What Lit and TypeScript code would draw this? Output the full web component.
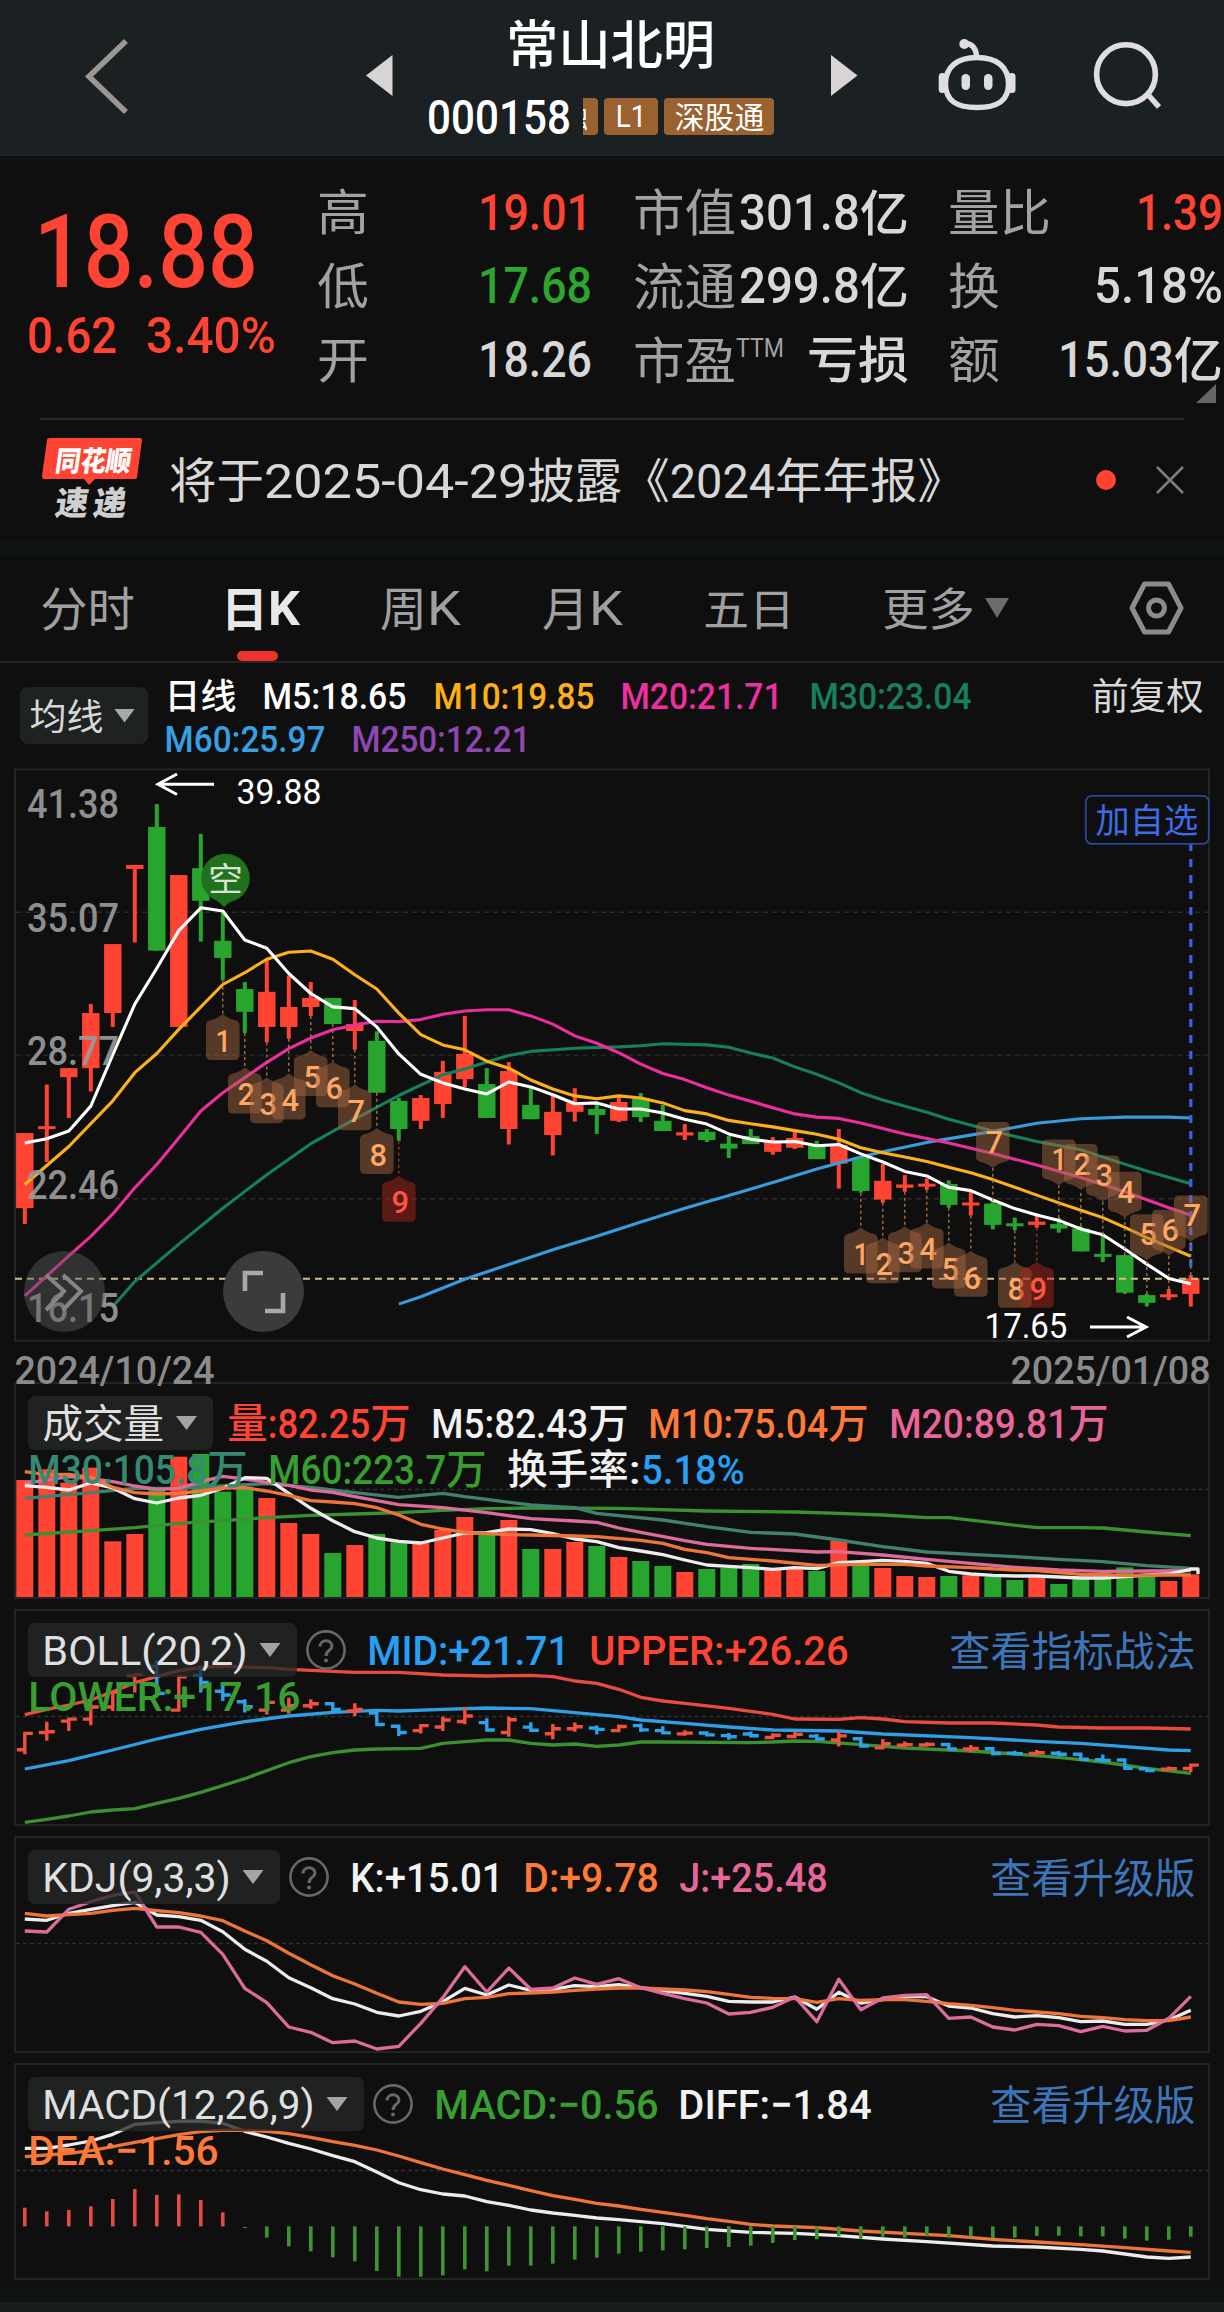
import { LitElement, html, svg, css, nothing } from "lit";
import { customElement, property } from "lit/decorators.js";

/* ---------- fitted text: Latin runs are condensed to a given width ---------- */

const CJK = /([\u3000-\u9fff\uff00-\uffef]+)/;
const LATIN_CAP = 0.711;
const CJK_RATIO = 1.38;

const weightOf = (run: string) =>
  [...run].reduce((n, c) => n + (".:,()".includes(c) ? 0.5 : 1), 0);

function fitRuns(text: string, w: number, cap: number, x = 0, cy = 0) {
  const runs = text.split(CJK).filter((r) => r.length > 0);
  const allCjk = runs.every((r) => CJK.test(r));
  const cjkSize = allCjk ? (w / text.length) * 1.02 : cap * CJK_RATIO;
  const latinSize = cap / LATIN_CAP;
  const pad = 0.04 * (allCjk ? cjkSize : latinSize);
  const total = w + pad * 2;
  const cjkWidth = runs.filter((r) => CJK.test(r)).reduce((n, r) => n + r.length * cjkSize, 0);
  const latinUnits = runs.filter((r) => !CJK.test(r)).reduce((n, r) => n + weightOf(r), 0);
  let cursor = x - pad;
  return runs.map((r) => {
    const cjk = CJK.test(r);
    const size = cjk ? cjkSize : latinSize;
    const len = allCjk ? total : cjk ? r.length * cjkSize : ((total - cjkWidth) * weightOf(r)) / latinUnits;
    const base = cy + size * (cjk ? 0.38 : 0.356);
    const at = cursor;
    cursor += len;
    return svg`<text x=${at} y=${base} font-size=${size} textLength=${len} lengthAdjust="spacingAndGlyphs">${r}</text>`;
  });
}

@customElement("fit-text")
class FitText extends LitElement {
  @property() text = "";
  @property({ type: Number }) w = 100;
  @property({ type: Number }) cap = 29;

  static styles = css`
    :host { display: block; flex: none; }
    svg { display: block; overflow: visible; fill: currentColor; }
    text { white-space: pre; }
  `;

  render() {
    const h = this.cap * 1.3;
    return html`<svg width=${this.w} height=${h}>${fitRuns(this.text, this.w, this.cap, 0, h / 2)}</svg>`;
  }
}

const fit = (text: string, w: number, cap: number, cls = "") =>
  html`<fit-text class=${cls} .text=${text} .w=${w} .cap=${cap}></fit-text>`;

/* ---------- series data ---------- */

const X0 = 24.8;
const STEP = 22;
const xAt = (i: number) => X0 + STEP * i;

type Series = Array<[number, number]>;
const seq = (...v: number[]): Series => v.map((y, i) => [i, y]);

// [high, body top, body bottom, low, rising]
const CANDLES: Array<[number, number, number, number, number]> = [
  [914, 914, 1098, 1137, 1], [795, 897, 904, 985, 1], [755, 755, 777, 877, 1], [598, 620, 755, 812, 1],
  [451, 451, 620, 654, 1], [257, 257, 267, 447, 1], [108, 164, 467, 467, 0], [282, 282, 654, 654, 1],
  [181, 265, 345, 445, 0], [370, 443, 485, 540, 0], [544, 561, 617, 669, 0], [490, 568, 654, 692, 1],
  [528, 605, 654, 683, 1], [544, 583, 605, 627, 1], [583, 583, 647, 647, 0], [588, 647, 664, 710, 1],
  [665, 688, 815, 815, 0], [828, 835, 904, 933, 0], [821, 828, 884, 904, 1], [737, 764, 843, 877, 1],
  [627, 720, 782, 802, 1], [755, 794, 877, 877, 0], [740, 762, 904, 942, 1], [800, 845, 880, 880, 0],
  [820, 862, 919, 969, 1], [804, 840, 862, 886, 1], [838, 855, 870, 916, 0], [825, 838, 884, 887, 1],
  [816, 828, 875, 887, 0], [845, 884, 909, 909, 0], [892, 912, 920, 931, 1], [904, 911, 931, 936, 0],
  [921, 940, 952, 975, 0], [904, 921, 941, 941, 0], [924, 936, 960, 967, 1], [909, 926, 950, 953, 1],
  [933, 945, 978, 978, 0], [904, 943, 989, 1050, 1], [975, 975, 1056, 1060, 0], [990, 1031, 1077, 1085, 1],
  [1017, 1040, 1048, 1058, 1], [1025, 1038, 1044, 1053, 1], [1030, 1039, 1090, 1097, 0], [1057, 1084, 1090, 1116, 1],
  [1080, 1087, 1139, 1150, 0], [1121, 1135, 1141, 1152, 0], [1111, 1131, 1139, 1146, 1], [1122, 1137, 1148, 1158, 0],
  [1142, 1148, 1204, 1204, 0], [1163, 1210, 1217, 1230, 0], [1213, 1213, 1305, 1308, 0], [1308, 1311, 1330, 1339, 0],
  [1296, 1309, 1315, 1323, 1], [1262, 1270, 1308, 1339, 1],
];

const MA5 = seq(938, 928, 909, 848, 722, 598, 510, 418, 362, 370, 441, 461, 523, 572, 605, 609, 654, 720, 770, 791, 806, 818, 789, 801, 820, 842, 840, 855, 855, 865, 880, 892, 916, 929, 936, 935, 945, 942, 965, 985, 1008, 1019, 1047, 1055, 1078, 1099, 1115, 1128, 1149, 1163, 1198, 1235, 1270, 1283);
const MA10: Series = [[0, 1040], [2, 947], [4, 835], [5, 766], [6, 719], [7, 660], [9, 550], [10, 521], [11, 488], [12, 471], [13, 468], [14, 488], [15, 526], [16, 561], [17, 620], [18, 673], [19, 698], [20, 710], [21, 738], [22, 755], [23, 784], [24, 806], [25, 823], [26, 830], [27, 823], [28, 828], [29, 840], [30, 859], [31, 867], [32, 883], [33, 891], [34, 899], [35, 908], [36, 917], [37, 929], [38, 950], [39, 962], [40, 973], [41, 984], [42, 998], [43, 1011], [44, 1028], [45, 1047], [46, 1066], [47, 1085], [48, 1103], [49, 1121], [50, 1145], [51, 1170], [52, 1193], [53, 1216]];
const MA20: Series = [[0, 1313], [2, 1215], [3, 1167], [4, 1112], [5, 1048], [6, 991], [7, 926], [8, 860], [9, 815], [10, 778], [11, 741], [12, 707], [13, 681], [14, 661], [15, 649], [16, 640], [17, 641], [18, 636], [19, 623], [20, 615], [21, 612], [22, 612], [23, 627], [24, 647], [25, 676], [26, 694], [27, 717], [28, 745], [29, 768], [30, 783], [31, 803], [32, 821], [33, 836], [34, 852], [35, 867], [36, 875], [37, 878], [38, 889], [40, 916], [42, 938], [44, 964], [46, 992], [48, 1023], [50, 1058], [52, 1097], [53, 1115]];
const MA30: Series = [[4.1, 1333], [5, 1278], [7, 1186], [9, 1098], [11, 1016], [13, 940], [15, 880], [17, 822], [19, 771], [20, 757], [21, 740], [22, 724], [23, 714], [25, 706], [27, 703], [28, 700], [29, 695], [31, 698], [32, 704], [33, 718], [34, 730], [35, 752], [36, 770], [37, 791], [38, 815], [39, 833], [41, 863], [42, 880], [44, 909], [46, 935], [48, 955], [50, 990], [51, 1007], [53, 1038]];
const MA60: Series = [[17, 1333], [18, 1315], [20, 1272], [22, 1236], [24, 1200], [26, 1167], [28, 1132], [30, 1098], [32, 1067], [34, 1035], [36, 1002], [38, 973], [39, 960], [41, 937], [44, 910], [46, 890], [48, 879], [50, 875], [52, 875], [53, 877]];

// [bar top, rising]
const VOLUME: Array<[number, number]> = [
  [300, 1], [268, 1], [308, 1], [263, 1], [484, 1], [462, 1], [325, 0], [230, 1], [222, 0], [335, 0], [322, 0],
  [354, 1], [429, 1], [462, 1], [519, 0], [495, 1], [462, 0], [487, 0], [487, 1], [450, 1], [411, 1], [465, 0],
  [420, 1], [507, 0], [507, 1], [486, 1], [498, 0], [531, 1], [543, 0], [558, 0], [576, 1], [567, 0], [564, 0],
  [552, 0], [570, 1], [567, 1], [573, 0], [482, 1], [557, 0], [564, 1], [588, 1], [591, 1], [588, 0], [586, 1],
  [590, 0], [600, 0], [592, 1], [612, 0], [597, 0], [578, 0], [562, 0], [588, 0], [603, 1], [583, 1],
];
const V5 = seq(317, 322, 330, 309, 324, 356, 369, 354, 346, 325, 293, 295, 340, 385, 422, 455, 474, 484, 489, 474, 459, 458, 447, 449, 461, 477, 485, 503, 513, 524, 540, 555, 559, 563, 568, 563, 566, 548, 545, 541, 544, 550, 574, 582, 586, 588, 588, 591, 594, 594, 590, 585, 582, 568);
const V10: Series = [[0, 275], [1, 284], [2, 283], [3, 292], [4, 322], [5, 338], [6, 342], [7, 340], [8, 333], [9, 324], [10, 323], [11, 333], [12, 346], [13, 362], [14, 366], [15, 371], [16, 383], [17, 405], [18, 433], [19, 447], [20, 457], [21, 461], [22, 464], [23, 465], [25, 468], [26, 470], [28, 481], [29, 490], [30, 508], [31, 518], [32, 533], [34, 543], [36, 556], [38, 553], [40, 553], [41, 558], [43, 563], [45, 570], [46, 572], [48, 583], [50, 586], [52, 585], [53, 585]];
const V20: Series = [[0, 310], [2, 290], [3, 296], [4, 305], [5, 318], [6, 328], [7, 325], [8, 305], [9, 289], [10, 297], [11, 307], [12, 316], [13, 330], [14, 337], [15, 350], [17, 374], [19, 383], [21, 398], [23, 416], [25, 423], [26, 427], [27, 444], [28, 457], [30, 482], [31, 493], [33, 505], [36, 516], [37, 515], [39, 525], [41, 538], [43, 550], [45, 562], [47, 570], [49, 574], [51, 573], [53, 572]];
const V30: Series = [[0, 355], [3, 338], [5, 325], [7, 325], [9, 318], [11, 311], [13, 322], [15, 338], [17, 352], [19, 340], [20, 350], [21, 358], [23, 375], [25, 383], [26, 400], [29, 420], [31, 440], [33, 457], [35, 462], [37, 480], [39, 500], [41, 516], [43, 523], [45, 530], [47, 538], [49, 545], [51, 557], [53, 565]];
const V60: Series = [[0, 465], [3, 452], [5, 443], [7, 430], [9, 422], [11, 413], [13, 406], [15, 402], [17, 398], [19, 391], [21, 386], [23, 384], [27, 385], [31, 393], [35, 396], [37, 400], [39, 405], [41, 413], [42, 413], [44, 428], [46, 443], [48, 443], [49, 444], [51, 456], [53, 467]];

const UPPER: Series = [[0, 1004], [1, 988], [2, 975], [3, 960], [4, 935], [5, 908], [6, 890], [7, 872], [8, 862], [9, 859], [11, 863], [12, 868], [15, 877], [17, 877], [19, 885], [21, 888], [23, 886], [24, 890], [25, 903], [26, 910], [27, 928], [28, 952], [29, 963], [30, 970], [32, 985], [34, 1003], [35, 1017], [37, 1018], [38, 1013], [39, 1017], [40, 1025], [42, 1029], [44, 1029], [46, 1035], [47, 1041], [49, 1044], [51, 1044], [53, 1047]];
const MID: Series = [[0, 1167], [2, 1142], [4, 1110], [6, 1077], [8, 1048], [10, 1025], [12, 1008], [14, 997], [16, 991], [17, 993], [19, 988], [21, 984], [23, 986], [25, 998], [27, 1010], [28, 1020], [30, 1030], [32, 1041], [34, 1050], [37, 1053], [39, 1062], [43, 1073], [46, 1084], [48, 1090], [50, 1100], [52, 1110], [53, 1112]];
const LOWER: Series = [[0, 1327], [1, 1318], [2, 1308], [3, 1296], [4, 1290], [5, 1286], [6, 1270], [7, 1255], [8, 1237], [10, 1196], [12, 1148], [13, 1130], [14, 1118], [15, 1110], [16, 1107], [18, 1105], [19, 1090], [20, 1085], [21, 1080], [22, 1080], [23, 1090], [24, 1095], [25, 1092], [26, 1099], [27, 1095], [28, 1086], [29, 1086], [33, 1088], [34, 1086], [35, 1083], [36, 1084], [38, 1094], [40, 1104], [43, 1113], [45, 1122], [47, 1132], [49, 1146], [51, 1165], [53, 1180]];

const KLINE = seq(297, 301, 280, 268, 257, 247, 285, 290, 301, 335, 388, 424, 473, 503, 536, 552, 577, 588, 574, 545, 505, 525, 495, 511, 508, 497, 500, 494, 503, 512, 520, 529, 544, 546, 546, 531, 568, 517, 549, 539, 530, 530, 558, 564, 581, 591, 587, 593, 605, 603, 613, 613, 600, 571);
const DLINE = seq(280, 288, 284, 280, 271, 265, 272, 278, 288, 302, 333, 362, 400, 434, 467, 492, 520, 546, 553, 550, 536, 532, 521, 519, 516, 511, 507, 504, 504, 507, 510, 515, 523, 532, 535, 536, 547, 536, 541, 539, 539, 544, 551, 556, 563, 571, 576, 581, 589, 593, 599, 602, 602, 591);
const JLINE = seq(333, 336, 268, 245, 226, 216, 321, 321, 337, 403, 505, 548, 621, 637, 668, 663, 687, 679, 610, 533, 440, 516, 444, 508, 504, 474, 493, 476, 503, 520, 536, 549, 582, 577, 562, 531, 605, 478, 569, 534, 526, 524, 595, 591, 621, 630, 613, 617, 635, 619, 633, 631, 595, 529);

const DIFF: Series = [[0, 985], [1, 985], [2, 975], [3, 963], [4, 943], [5, 913], [6, 908], [7, 904], [8, 903], [9, 910], [10, 934], [11, 951], [12, 970], [13, 987], [14, 1007], [15, 1025], [16, 1056], [17, 1088], [18, 1109], [19, 1122], [20, 1128], [21, 1145], [22, 1156], [23, 1170], [24, 1179], [25, 1186], [26, 1194], [27, 1199], [29, 1211], [31, 1228], [33, 1237], [35, 1240], [37, 1247], [39, 1257], [41, 1265], [44, 1278], [46, 1281], [48, 1288], [49, 1293], [50, 1302], [51, 1311], [52, 1315], [53, 1311]];
const DEA: Series = [[0, 1010], [1, 1005], [2, 1000], [3, 992], [4, 980], [5, 967], [6, 956], [7, 944], [8, 935], [9, 931], [10, 931], [11, 934], [12, 941], [13, 952], [14, 965], [15, 976], [16, 990], [17, 1008], [18, 1028], [19, 1047], [20, 1064], [21, 1081], [22, 1096], [23, 1112], [24, 1127], [25, 1138], [26, 1150], [27, 1158], [28, 1168], [29, 1177], [30, 1186], [31, 1196], [32, 1204], [33, 1213], [34, 1218], [36, 1223], [38, 1233], [40, 1240], [42, 1247], [44, 1258], [46, 1266], [48, 1274], [50, 1283], [52, 1293], [53, 1297]];
const HIST = [1163, 1174, 1170, 1159, 1137, 1107, 1125, 1123, 1140, 1177, 1224, 1253, 1279, 1294, 1312, 1324, 1353, 1370, 1370, 1366, 1348, 1354, 1337, 1337, 1331, 1319, 1313, 1301, 1295, 1291, 1288, 1284, 1281, 1277, 1269, 1260, 1258, 1249, 1256, 1250, 1253, 1249, 1253, 1249, 1254, 1253, 1248, 1247, 1249, 1249, 1256, 1262, 1259, 1250];

// Sequence markers: [candle, digit, outer edge, hangs below the candle]
const MARKS: Array<[number, number, number, boolean]> = [
  [9, 1, 735, true], [10, 2, 866, true], [11, 3, 890, true], [12, 4, 881, true], [13, 5, 823, true],
  [14, 6, 851, true], [15, 7, 907, true], [16, 8, 1014, true], [17, 9, 1131, true],
  [38, 1, 1258, true], [39, 2, 1282, true], [40, 3, 1255, true], [41, 4, 1246, true], [42, 5, 1295, true],
  [43, 6, 1315, true], [45, 8, 1342, true], [46, 9, 1342, true],
  [44, 7, 887, false], [47, 1, 930, false], [48, 2, 941, false], [49, 3, 969, false], [50, 4, 1009, false],
  [51, 5, 1113, false], [52, 6, 1102, false], [53, 7, 1067, false],
];

const price = (v: number) => v / 2.45;
const third = (v: number) => v / 3;

const path = (s: Series, y: (v: number) => number) =>
  s.map(([i, v], n) => `${n ? "L" : "M"}${xAt(i).toFixed(1)} ${y(v).toFixed(1)}`).join("");
const line = (s: Series, cls: string, y = third) => svg`<path class="line ${cls}" d=${path(s, y)} />`;

/* ---------- price chart ---------- */

@customElement("price-chart")
class PriceChart extends LitElement {
  static styles = css`
    :host { display: block; }
    svg { display: block; overflow: visible; font-family: inherit; }
    .up { fill: #ff4433; }
    .down { fill: #27a52f; }
    .line { fill: none; stroke-width: 3.1; stroke-linejoin: round; }
    .white { stroke: #fff; }
    .orange { stroke: #fcb01a; }
    .pink { stroke: #ea2f9c; }
    .teal { stroke: #16805a; }
    .blue { stroke: #379bdc; }
    .grid { stroke: #2b2b2b; stroke-width: 1.4; stroke-dasharray: 5 4; }
    .frame { fill: none; stroke: #252525; stroke-width: 2; }
    .now { stroke: #d2bf94; stroke-width: 2; stroke-dasharray: 7 5; }
    .axis { fill: #9a9a9a; opacity: 0.92; font-weight: 500; }
    .note { fill: #fff; }
    .arrow { fill: none; stroke: #fff; stroke-width: 3; }
    .stem { stroke: #b07848; stroke-width: 1.3; stroke-dasharray: 3 3; }
    .stem.hot { stroke: #a33228; }
    .mark { fill: rgba(171, 106, 68, 0.46); }
    .mark.hot { fill: rgba(170, 38, 28, 0.5); }
    .digit { fill: #ffa765; font-weight: 500; }
    .digit.hot { fill: #ff5443; }
    .watch { fill: none; stroke: #2c479c; stroke-width: 1.8; }
    .watchText { fill: #3f6ce6; }
    .cursor { stroke: #3a64e0; stroke-width: 3.2; stroke-dasharray: 8 8; }
    .pin { fill: #21701e; }
    .pinText { fill: #d5e6d0; }
    .round { fill: #3a3c3b; }
    .round.dim { fill: rgba(90, 90, 90, 0.45); }
    .glyph { fill: none; stroke: #a8a8a8; stroke-width: 4.6; }
    .glyph.dim { stroke: #858585; stroke-width: 4; }
  `;

  private candle = ([hi, top, bot, lo, up]: (typeof CANDLES)[number], i: number) => svg`
    <g class=${up ? "up" : "down"}>
      <rect x=${xAt(i) - 2} y=${price(hi)} width="4" height=${price(lo - hi)} />
      <rect x=${xAt(i) - 8.7} y=${price(top)} width="17.4" height=${Math.max(price(bot - top), 3)} />
    </g>`;

  private mark = ([i, digit, edge, below]: (typeof MARKS)[number]) => {
    const x = xAt(i);
    const hot = digit === 9 ? "hot" : "";
    const y = price(edge);
    const tip = below ? y - 46 : y + 46;
    const s = below ? -1 : 1;
    const from = below ? CANDLES[i][3] : CANDLES[i][0];
    const w = 16.8;
    const d = `M${x - w + 5} ${y}H${x + w - 5}Q${x + w} ${y} ${x + w} ${y + s * 5}V${y + s * 35}` +
      `Q${x + w} ${y + s * 39} ${x + w - 5} ${y + s * 40}Q${x + 6} ${y + s * 41} ${x} ${tip}` +
      `Q${x - 6} ${y + s * 41} ${x - w + 5} ${y + s * 40}Q${x - w} ${y + s * 39} ${x - w} ${y + s * 35}` +
      `V${y + s * 5}Q${x - w} ${y} ${x - w + 5} ${y}Z`;
    return svg`
      <line class="stem ${hot}" x1=${x} x2=${x} y1=${price(from)} y2=${tip} />
      <path class="mark ${hot}" d=${d} />
      <g class="digit ${hot}">${fitRuns(String(digit), digit === 1 ? 13 : 15, 22.5, x - 6, y + s * 19.5)}</g>`;
  };

  render() {
    const axis: Array<[string, number]> = [["41.38", 107], ["35.07", 386], ["28.77", 712], ["22.46", 1041], ["16.15", 1342]];
    return html`<svg width="1224" height="600" viewBox="0 0 1224 600">
      ${[373, 723, 1075].map((v) => svg`<line class="grid" x1="16" x2="1209" y1=${price(v)} y2=${price(v)} />`)}
      <rect class="frame" x="15" y="9.4" width="1194" height="571.4" />
      ${CANDLES.map(this.candle)}
      <g class="pin">
        <path d="M224 147 L213 137 H236 Z" />
        <circle cx="225.5" cy="118" r="24.3" />
      </g>
      <g class="pinText">${fitRuns("空", 32, 24, 209.5, 118.5)}</g>
      <line class="now" x1="15" x2="1209" y1="518.8" y2="518.8" />
      ${line(MA60, "blue", price)} ${line(MA30, "teal", price)} ${line(MA20, "pink", price)}
      ${line(MA10, "orange", price)} ${line(MA5, "white", price)}
      <line class="cursor" x1="1190.8" x2="1190.8" y1="83" y2="510" />
      ${MARKS.map(this.mark)}
      <g class="axis">${axis.map(([t, v]) => fitRuns(t, 89, 28.5, 28.5, price(v)))}</g>
      <circle class="round dim" cx="64.5" cy="531.5" r="40.5" />
      <path class="glyph dim" d="M46 515L64 531L46 550M63 515L81 531L63 550" />
      <circle class="round" cx="263.5" cy="531.5" r="40.5" />
      <path class="glyph" d="M245 531V513H263M283 533V551H265" />
      <g class="note">${fitRuns("39.88", 82, 24.5, 238, 32.2)}${fitRuns("17.65", 80, 24.5, 986, 565.5)}</g>
      <path class="arrow" d="M214 24.3H158M177 14L158 24.3L177 34.5M1090 567H1146M1127 557L1146 567L1127 577" />
      <rect class="watch" x="1085.8" y="35.8" width="123" height="48" rx="6" />
      <g class="watchText">${fitRuns("加自选", 100, 24, 1097, 60.5)}</g>
    </svg>`;
  }
}

/* ---------- indicator panels ---------- */

type Legend = [string, number, string];

@customElement("indicator-panel")
class IndicatorPanel extends LitElement {
  @property() name = "";
  @property({ type: Number }) nameWidth = 100;
  @property({ attribute: false }) legend: Legend[] = [];
  @property({ attribute: false }) extra: Legend[] = [];
  @property() link = "";
  @property({ type: Number }) linkWidth = 203;
  @property({ attribute: false }) plot: unknown = nothing;
  @property({ type: Boolean }) help = false;

  static styles = css`
    :host { display: grid; height: 213px; margin: 0 14px; border: 2px solid #232323; box-sizing: content-box; }
    .canvas, .text { grid-area: 1 / 1; }
    .canvas { display: block; overflow: visible; }
    .text { display: flex; flex-direction: column; padding: 12px 14px 0 12px; z-index: 1; }
    .head { display: flex; align-items: center; height: 54px; }
    .select { display: flex; align-items: center; gap: 14px; height: 54px; box-sizing: border-box; padding: 0 16px 0 15.5px;
      border-radius: 7px; background: rgba(37, 40, 39, 0.78); color: #e0e0e0; }
    .tri { width: 21px; height: 14px; background: #a4a4a4; clip-path: polygon(0 0, 100% 0, 50% 100%); }
    .help { margin-left: 9px; margin-right: 7px; fill: none; stroke: #686868; stroke-width: 2.6; }
    .help .q { stroke-width: 3; }
    .help .dot { fill: #686868; stroke: none; }
    .items { display: flex; gap: 23.5px; margin-left: 16px; align-items: center; font-weight: 500; }
    .row2 { display: flex; gap: 24px; height: 38px; align-items: center; padding-left: 2px; font-weight: 500; }
    .link { margin-left: auto; color: #3e75b8; }
    .red { color: #ff4433; } .white { color: #f2f2f2; } .orange { color: #ff7a38; } .pink { color: #e8669a; }
    .teal { color: #368a74; } .green { color: #389e30; } .blue { color: #269ff5; }
    .tight { margin-left: -20px; }
    .line { fill: none; stroke-width: 3.3; stroke-linejoin: round; }
    .line.white { stroke: #ececec; } .line.orange { stroke: #ee7538; } .line.pink { stroke: #dc6c9a; }
    .line.teal { stroke: #438070; } .line.green { stroke: #3c9032; } .line.blue { stroke: #309fe4; } .line.red { stroke: #e84c40; }
    .bar.up { fill: #ff4433; } .bar.down { fill: #27a52f; }
    .thin.up { fill: #e84a40; } .thin.down { fill: #3f9432; }
    .tick { fill: none; stroke-width: 3.4; }
    .tick.up { stroke: #f2503f; } .tick.down { stroke: #2ba2ea; }
    .grid { stroke: #303030; stroke-width: 1.4; stroke-dasharray: 4 3; }
  `;

  private item = ([t, w, c]: Legend) => fit(t, w, 29.3, c);

  render() {
    return html`
      <svg class="canvas" width="1192" height="213" viewBox="16 0 1192 213">
        <line class="grid" x1="16" x2="1208" y1="105.5" y2="105.5" />
        ${this.plot}
      </svg>
      <div class="text">
        <div class="head">
          <div class="select">${fit(this.name, this.nameWidth, 29.3)}<div class="tri"></div></div>
          ${this.help
            ? html`<svg class="help" width="40" height="40" viewBox="0 0 40 40">
                <circle cx="20" cy="20" r="18.6" />
                <path class="q" d="M14 16.5C14 9 26 9 26 16C26 20.5 20 20 20 26" />
                <circle class="dot" cx="20" cy="30.5" r="2" />
              </svg>`
            : nothing}
          <div class="items">${this.legend.map(this.item)}</div>
          ${this.link ? fit(this.link, this.linkWidth, 29.3, "link") : nothing}
        </div>
        <div class="row2">${this.extra.map(this.item)}</div>
      </div>`;
  }
}

const volumePlot = () => svg`<g transform="translate(0 -4)">
  ${VOLUME.map(([v, up], i) => svg`<rect class="bar ${up ? "up" : "down"}" x=${xAt(i) - 8.5} y=${third(v)} width="17" height=${third(651 - v)} />`)}
  ${line(V60, "green")} ${line(V30, "teal")} ${line(V20, "pink")} ${line(V5, "white")} ${line(V10, "orange")}
  <path class="line white" d="M1190 189H1198V194" />
</g>`;

const bollY = (v: number) => third(1060 + (v - 914) * 0.268);
const bollPlot = () => svg`<g transform="translate(0 -231)">
  ${line(LOWER, "green")} ${line(MID, "blue")} ${line(UPPER, "red")}
  ${CANDLES.map(([hi, top, bot, lo, up], i) => {
    const x = xAt(i);
    const open = bollY(up ? bot : top);
    const close = bollY(up ? top : bot);
    return svg`<path class="tick ${up ? "up" : "down"}" d="M${x} ${bollY(hi) - 1}V${bollY(lo) + 1}M${x - 8} ${open}H${x + 1.5}M${x - 1.5} ${close}H${x + 8}" />`;
  })}
</g>`;

const kdjPlot = () => svg`<g transform="translate(0 -18)">
  ${line(KLINE, "white")} ${line(DLINE, "orange")} ${line(JLINE, "pink")}
</g>`;

const macdPlot = () => svg`<g transform="translate(0 -245)">
  ${line(DIFF, "white")} ${line(DEA, "orange")}
  ${HIST.map((v, i) => {
    const top = i === 10 ? 1221 : Math.min(v, 1219);
    const h = i === 10 ? 3 : Math.abs(v - 1219);
    return svg`<rect class="thin ${v < 1219 ? "up" : "down"}" x=${xAt(i) - 1.8} y=${third(top)} width="3.6" height=${third(h)} />`;
  })}
</g>`;

/* ---------- page ---------- */

@customElement("app-root")
class AppRoot extends LitElement {
  static styles = css`
    :host { display: flex; flex-direction: column; width: 1224px; height: 2312px; overflow: hidden; background: #0f0f0f; color: #d8d8d8;
      font-family: Roboto, "Noto Sans CJK SC", sans-serif; font-weight: 400; }
    .header { display: grid; grid-template-columns: 365.5px 26.5px 439px 26.5px 80px 157px 1fr; align-items: start; height: 156px;
      box-sizing: border-box; background: #1b2123; border-bottom: 2px solid #202225; }
    .header svg { display: block; overflow: visible; }
    .back { margin: 39px 0 0 84px; fill: none; stroke: #9b9692; stroke-width: 5.6; }
    .nav { margin-top: 55px; fill: #d8d3d5; }
    .robot { margin-top: 38px; fill: #e0dde0; }
    .robot .o { fill: none; stroke: #e0dde0; stroke-width: 5.4; stroke-linecap: round; }
    .search { margin-top: 42px; fill: none; stroke: #e0dde0; stroke-width: 5.6; }
    .title { display: flex; flex-direction: column; color: #fff; }
    .title .name { margin: 19px 0 0 116px; height: 50px; display: flex; align-items: center; font-weight: 500; }
    .sub { display: flex; align-items: center; height: 37px; margin: 29px 0 0 36.5px; gap: 6px; }
    .sub .code { margin-right: 8px; font-weight: 500; }
    .tag { display: flex; align-items: center; justify-content: center; height: 37px; border-radius: 4px; background: #9a6231; }
    .tag.cut { width: 15.5px; justify-content: flex-end; overflow: hidden; border-radius: 0 4px 4px 0; padding-right: 0; }
    .cutText { margin-right: 11px; }
    .tag.l1 { width: 54px; }
    .tag.sz { width: 110px; }

    .quote { display: grid; grid-template-columns: 290px 272px 273px 273px; column-gap: 0; height: 262px; padding-left: 29px; width: 1195px; position: relative; }
    .last { display: flex; flex-direction: column; color: #ff4433; }
    .big { margin: 47.5px 0 0 8.5px; font-weight: 500; }
    .chg { display: flex; gap: 33px; margin-top: 15px; font-weight: 500; }
    .col { display: grid; grid-template-rows: repeat(3, 73.6px); padding-top: 19px; align-items: center; height: 220px; }
    .c1 { width: 271px; }
    .c2 { margin-left: 44px; width: 272px; }
    .c3 { margin-left: 86px; width: 271px; }
    .cell { display: flex; justify-content: space-between; align-items: center; font-weight: 500; }
    .key { color: #a2a2a2; font-weight: 400; display: flex; gap: 3px; }
    .up { color: #ff4433; } .down { color: #2ea52f; }
    .corner { position: absolute; right: 8px; bottom: 15px; width: 20px; height: 19px; background: #656565; clip-path: polygon(100% 0, 100% 100%, 0 100%); }

    .news { display: flex; align-items: center; height: 122px; margin: 0 40px; border-top: 2px solid #2a2a2a; box-sizing: border-box; }
    .news .logo { overflow: visible; margin: -4px 29px 0 1px; }
    .logo .r { fill: #ff4433; } .logo .w { fill: #fff; } .logo .g { fill: #cfcfcf; }
    .logo text { font-weight: 900; font-family: "Noto Sans CJK SC", sans-serif; }
    .dot { width: 20px; height: 20px; border-radius: 50%; background: #ff4433; margin-left: auto; margin-right: 40px; }
    .close { stroke: #7c7c7c; stroke-width: 2.6; fill: none; }
    .band { height: 15px; background: #0f1413; }

    .tabs { display: grid; grid-template-columns: 181px 159px 162px 161px 179px 245px 1fr; align-items: center; height: 108px; padding: 0 0 0 42px;
      box-sizing: border-box; color: #a0a0a0; border-bottom: 2px solid #262626; }
    .tab { display: flex; align-items: center; gap: 12px; height: 106px; }
    .tab.on { position: relative; color: #e8e8e8; font-weight: 700; }
    .tab.on::after { content: ""; position: absolute; left: 14px; bottom: 0; width: 41px; height: 10px; border-radius: 5px; background: #f0322f; }
    .tri { clip-path: polygon(0 0, 100% 0, 50% 100%); background: #6c6c6c; width: 24px; height: 20px; }
    .gear { fill: none; stroke: #8c8c8c; stroke-width: 5; }

    .ma { display: flex; height: 97px; padding-left: 20px; }
    .maBtn { display: flex; align-items: center; gap: 12px; width: 127.5px; height: 57px; margin-top: 24px; border-radius: 8px; background: #1e2221;
      box-sizing: border-box; padding-left: 11px; }
    .maBtn .tri { background: #a8a8a8; width: 21px; height: 14px; }
    .lines { display: flex; flex-direction: column; margin-left: 18px; padding-top: 11px; font-weight: 500; }
    .ln { display: flex; align-items: center; gap: 29.5px; height: 46px; }
    .adj { margin: 13px 0 0 auto; padding-right: 22px; height: 40px; display: flex; align-items: center; }
    .w { color: #fff; } .o { color: #fcb015; } .p { color: #ee2fa0; } .t { color: #16805a; } .b { color: #379fe2; } .v { color: #8f48b0; }

    .dates { display: flex; justify-content: space-between; align-items: center; height: 24px; margin-top: -2px; padding: 0 15px 0 16px; color: #8b8b8b; font-weight: 500; z-index: 2; }
    .panels { display: flex; flex-direction: column; gap: 10px; margin-top: 0; }
    .foot { flex: 1; margin-top: 9px; background: linear-gradient(#111511 0 13px, #1a1e1a 13px); }
  `;

  private cell(key: unknown, value: string, w: number, cls = "") {
    return html`<div class="cell"><div class="key">${key}</div>${fit(value, w, 35.6, cls)}</div>`;
  }

  render() {
    const k = (s: string) => fit(s, s.length === 1 ? 48 : 99, 36);
    return html`
      <div class="header">
        <svg class="back" width="45" height="74"><path d="M42 2L5 37.5L42 73" /></svg>
        <svg class="nav" width="27" height="41"><path d="M26.5 0V41L0 20.5Z" /></svg>
        <div class="title">
          <div class="name">${fit("常山北明", 205, 38)}</div>
          <div class="sub">
            ${fit("000158", 140, 34.5, "code")}
            <div class="tag cut">${fit("融", 28, 21, "cutText")}</div>
            <div class="tag l1">${fit("L1", 28, 22)}</div>
            <div class="tag sz">${fit("深股通", 87, 22)}</div>
          </div>
        </div>
        <svg class="nav" width="27" height="41"><path d="M0 0V41L26.5 20.5Z" /></svg>
        <div></div>
        <svg class="robot" width="80" height="74">
          <path class="o" d="M39 19.5C59 19.5 70.5 29 70.5 46C70.5 63 59 69.5 39 69.5C19 69.5 7.5 63 7.5 46C7.5 29 19 19.5 39 19.5Z" />
          <path class="o" d="M27 5.5C34 5.5 38 10 38.5 18" />
          <circle cx="26.3" cy="6" r="5" />
          <rect x="0.7" y="35" width="7.5" height="20" rx="3.5" /><rect x="70" y="35" width="7.5" height="20" rx="3.5" />
          <rect x="23.5" y="36" width="8.5" height="16" rx="4.2" /><rect x="46" y="36" width="8.5" height="16" rx="4.2" />
        </svg>
        <svg class="search" width="68" height="68"><circle cx="31" cy="32.2" r="29.4" /><path d="M52 51.5L64 65" /></svg>
      </div>

      <div class="quote">
        <div class="last">
          ${fit("18.88", 216, 72, "big")}
          <div class="chg">${fit("0.62", 86, 35.6)}${fit("3.40%", 126, 35.6)}</div>
        </div>
        <div class="col c1">
          ${this.cell(k("高"), "19.01", 110, "up")}${this.cell(k("低"), "17.68", 110, "down")}${this.cell(k("开"), "18.26", 110)}
        </div>
        <div class="col c2">
          ${this.cell(k("市值"), "301.8亿", 166)}${this.cell(k("流通"), "299.8亿", 166)}
          ${this.cell(html`${k("市盈")}${fit("TTM", 46, 18)}`, "亏损", 98)}
        </div>
        <div class="col c3">
          ${this.cell(k("量比"), "1.39", 83, "up")}${this.cell(k("换"), "5.18%", 125)}${this.cell(k("额"), "15.03亿", 161)}
        </div>
        <div class="corner"></div>
      </div>

      <div class="news">
        <svg class="logo" width="101" height="82">
          <path class="r" d="M9 1H99Q101 1 101 3L96 40Q96 42 93 42H54L48 48L43 42H3Q1 42 1 39L6 3Q6 1 9 1Z" />
          <g transform="skewX(-8)">
            <text class="w" x="18" y="34" font-size="28" textLength="76" lengthAdjust="spacingAndGlyphs">同花顺</text>
            <text class="g" x="24" y="78" font-size="33" textLength="33">速</text>
            <text class="g" x="62" y="78" font-size="33" textLength="33">递</text>
          </g>
        </svg>
        ${fit("将于2025-04-29披露《2024年年报》", 792, 34.4)}
        <div class="dot"></div>
        <svg class="close" width="28" height="28"><path d="M1 1L27 27M27 1L1 27" /></svg>
      </div>
      <div class="band"></div>

      <div class="tabs">
        <div class="tab">${fit("分时", 91, 33)}</div>
        <div class="tab on">${fit("日K", 75, 34)}</div>
        <div class="tab">${fit("周K", 77, 34)}</div>
        <div class="tab">${fit("月K", 77, 34)}</div>
        <div class="tab">${fit("五日", 88, 33)}</div>
        <div class="tab">${fit("更多", 89, 33)}<div class="tri"></div></div>
        <svg class="gear" width="55" height="54"><path d="M15.5 3H39.5L52 27L39.5 51H15.5L3 27Z" stroke-linejoin="round" /><circle cx="27.5" cy="27" r="8" /></svg>
      </div>

      <div class="ma">
        <div class="maBtn">${fit("均线", 71, 26)}<div class="tri"></div></div>
        <div class="lines">
          <div class="ln">
            ${fit("日线", 69, 26, "w")}${fit("M5:18.65", 141, 26.8, "w")}${fit("M10:19.85", 158, 26.8, "o")}
            ${fit("M20:21.71", 159, 26.8, "p")}${fit("M30:23.04", 159, 26.8, "t")}
          </div>
          <div class="ln">${fit("M60:25.97", 158, 26.8, "b")}${fit("M250:12.21", 176, 26.8, "v")}</div>
        </div>
        <div class="adj">${fit("前复权", 109, 26)}</div>
      </div>

      <price-chart></price-chart>
      <div class="dates">${fit("2024/10/24", 197, 28)}${fit("2025/01/08", 197, 28)}</div>
      <div class="panels">
        <indicator-panel .name=${"成交量"} .nameWidth=${118.5} .plot=${volumePlot()}
          .legend=${[["量:82.25万", 180, "red"], ["M5:82.43万", 194, "white"], ["M10:75.04万", 217, "orange"], ["M20:89.81万", 216, "pink"]] as Legend[]}
          .extra=${[["M30:105.8万", 216, "teal"], ["M60:223.7万", 215, "green"], ["换手率:", 130, "white"], ["5.18%", 100, "blue tight"]] as Legend[]}></indicator-panel>
        <indicator-panel help .name=${"BOLL(20,2)"} .nameWidth=${202} .link=${"查看指标战法"} .linkWidth=${243} .plot=${bollPlot()}
          .legend=${[["MID:+21.71", 199, "blue"], ["UPPER:+26.26", 256, "red"]] as Legend[]}
          .extra=${[["LOWER:+17.16", 269, "green"]] as Legend[]}></indicator-panel>
        <indicator-panel help .name=${"KDJ(9,3,3)"} .nameWidth=${185} .link=${"查看升级版"} .linkWidth=${202} .plot=${kdjPlot()}
          .legend=${[["K:+15.01", 150, "white"], ["D:+9.78", 132, "orange"], ["J:+25.48", 145, "pink"]] as Legend[]}></indicator-panel>
        <indicator-panel help .name=${"MACD(12,26,9)"} .nameWidth=${269} .link=${"查看升级版"} .linkWidth=${202} .plot=${macdPlot()}
          .legend=${[["MACD:−0.56", 221, "green"], ["DIFF:−1.84", 190, "white"]] as Legend[]}
          .extra=${[["DEA:−1.56", 187, "orange"]] as Legend[]}></indicator-panel>
      </div>
      <div class="foot"></div>
    `;
  }
}
